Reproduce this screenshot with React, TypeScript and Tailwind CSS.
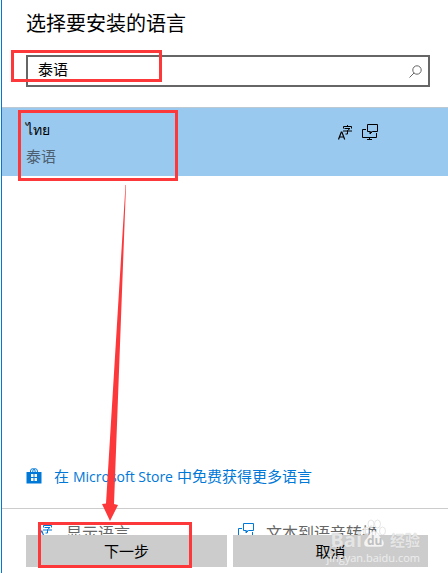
import React, { useState } from 'react';

interface Language {
  id: string;
  nativeName: string;
  localName: string;
}

const languages: Language[] = [{ id: 'th', nativeName: 'ไทย', localName: '泰语' }];

const DisplayLanguageIcon = ({ className }: { className?: string }) => (
  <svg viewBox="0 0 16 16" className={className} fill="none" stroke="currentColor" aria-hidden="true">
    <path d="M.5 15.500 3.300 8h.6l2.800 7.500M1.500 13h4.200" strokeWidth="1.2" />
    <path d="M9.500 1v1.500M5.500 4.500v-2h8v2M6.500 4.500h5.500L9.500 6.500M5 7h9M9.500 6.500v3.500H7.500" />
  </svg>
);

const SpeechIcon = ({ className }: { className?: string }) => (
  <svg viewBox="0 0 16 16" className={className} fill="none" stroke="currentColor" aria-hidden="true">
    <path d="M5.500.5h10v7h-5L8 10V7.500H5.500z" />
    <path d="M8 7.500h2.500L8 10z" fill="currentColor" stroke="none" />
    <path d="M4 5.500H.5v8h14V9M7.500 13.500v2M5 15.500h5" />
  </svg>
);

const StoreIcon = () => (
  <svg viewBox="0 0 16 16" className="size-4 shrink-0" fill="none" aria-hidden="true">
    <path d="M4.500 5V3a2.300 2.300 0 0 1 4.600 0v2M6.800 5V3a2.300 2.300 0 0 1 4.600 0v2" stroke="currentColor" />
    <path d="M.5 4h15v11.500H.5z" fill="currentColor" />
    <path d="M5 6h2.500v3H5zM8.500 6H11v3H8.500zM5 10h2.500v3H5zM8.500 10H11v3H8.500z" fill="#fff" />
  </svg>
);

const Watermark = () => (
  <div className="pointer-events-none absolute -top-[17px] right-7 flex flex-col items-end text-white/65" aria-hidden="true">
    <div className="flex h-8 items-end font-bold leading-5">
      <span className="text-xl leading-5 [text-shadow:0_0_1px_#b4b4b4]">Bai</span>
      <svg viewBox="0 0 24 32" className="h-8 w-6 opacity-80" fill="#fff" stroke="#ccc" strokeWidth="0.6">
        <ellipse cx="4" cy="13" rx="3" ry="4" />
        <ellipse cx="9" cy="6" rx="3" ry="4" />
        <ellipse cx="15.500" cy="6" rx="3" ry="4" />
        <ellipse cx="20.500" cy="13" rx="3" ry="4" />
        <path d="M12 13c4 0 5 5 8 8s3 8-2 8H6c-5 0-5-5-2-8s4-8 8-8z" />
        <text x="5" y="27" fontSize="12" fontWeight="700" fill="#bbb" stroke="none">du</text>
      </svg>
      <span className="ml-1 text-[15px] leading-5 [text-shadow:0_0_1px_#b4b4b4]">经验</span>
    </div>
    <span className="text-[11px] leading-4">jingyan.baidu.com</span>
  </div>
);

const App: React.FC = () => {
  const [query, setQuery] = useState('泰语');
  const [selected, setSelected] = useState('th');

  return (
    <div className="ml-px flex min-h-screen flex-col border-l border-[#0078d7] bg-white font-['Open_Sans','Noto_Sans_CJK_SC',sans-serif] text-black">
      <header className="px-6 pt-[9px]">
        <h1 className="text-xl leading-[30px]">
          <label htmlFor="search">选择要安装的语言</label>
        </h1>
      </header>

      {/* Search */}
      <div className="relative ml-6 mr-[18px] mt-4 flex h-8 items-center border-2 border-[#666] pl-2.5 pr-1.5">
        <input
          id="search"
          type="text"
          value={query}
          onChange={(e) => setQuery(e.target.value)}
          className="min-w-0 flex-1 bg-transparent pb-1 text-[15px] leading-5 outline-none"
        />
        <svg viewBox="0 0 13 13" className="size-[13px] text-[#666]" fill="none" stroke="currentColor" aria-hidden="true">
          <circle cx="8" cy="5" r="4.200" />
          <path d="M5 8 .5 12.500" />
        </svg>
        <span className="absolute -left-[17px] -top-[7px] h-8 w-[151px] border-3 border-[#fc383b]" />
      </div>

      {/* Language list */}
      <div className="relative mt-5 flex-1 border-t border-[#bcc8d2]">
        {languages.map((lang) => (
          <button
            key={lang.id}
            onClick={() => setSelected(lang.id)}
            className={`relative flex h-[68px] w-full items-start justify-between pl-6 pr-[70px] pt-2.5 text-left ${
              selected === lang.id ? 'bg-[#9ac9ef]' : 'bg-white'
            }`}
          >
            <span className="flex flex-col">
              <span className="text-sm leading-6">{lang.nativeName}</span>
              <span className="mt-1 text-[15px] leading-5 text-[#4c5f70]">{lang.localName}</span>
            </span>
            <span className="mt-1.5 flex gap-2">
              <DisplayLanguageIcon className="size-4" />
              <SpeechIcon className="size-4" />
            </span>
            <span className="absolute left-4 top-0.5 h-[71px] w-40 border-3 border-[#fc383b]" />
          </button>
        ))}
        <svg viewBox="0 0 24 336" className="absolute left-[100px] top-[77px] z-10 h-[336px] w-6" fill="#fc383b" aria-hidden="true">
          <path d="M23.500 0h.5L12 319l4 1-8 16-8-17 4-.5z" />
        </svg>
      </div>

      <div className="px-6 pb-5">
        <a href="#store" className="flex items-center gap-3 text-[15px] leading-6 text-[#0078d7]">
          <StoreIcon />
          <span>
            在 <span className="text-sm">Microsoft Store</span> 中免费获得更多语言
          </span>
        </a>
      </div>

      {/* Feature legend, cut off by the footer buttons */}
      <div className="grid h-[27px] grid-cols-[200px_1fr] overflow-hidden border-t border-[#ccc] pl-9 text-base leading-6 text-[#666]">
        <div className="flex items-start gap-3 pt-3">
          <DisplayLanguageIcon className="mt-0.5 size-4 text-[#0078d7]" />
          <span>显示语言</span>
        </div>
        <div className="flex items-start gap-3 pt-3">
          <SpeechIcon className="mt-0.5 size-4 text-[#0078d7]" />
          <span>文本到语音转换</span>
        </div>
      </div>

      <footer className="relative grid grid-cols-[201fr_195fr] gap-1.5 pb-1.5 pl-6 pr-5">
        <button className="h-8 bg-[#ccc] text-[15px] leading-6">下一步</button>
        <button className="h-8 bg-[#ccc] text-[15px] leading-6">取消</button>
        <span className="absolute -top-[13px] left-9 h-[46px] w-[154px] border-3 border-[#fc383b]" />
        <Watermark />
      </footer>
    </div>
  );
};

export default App;
